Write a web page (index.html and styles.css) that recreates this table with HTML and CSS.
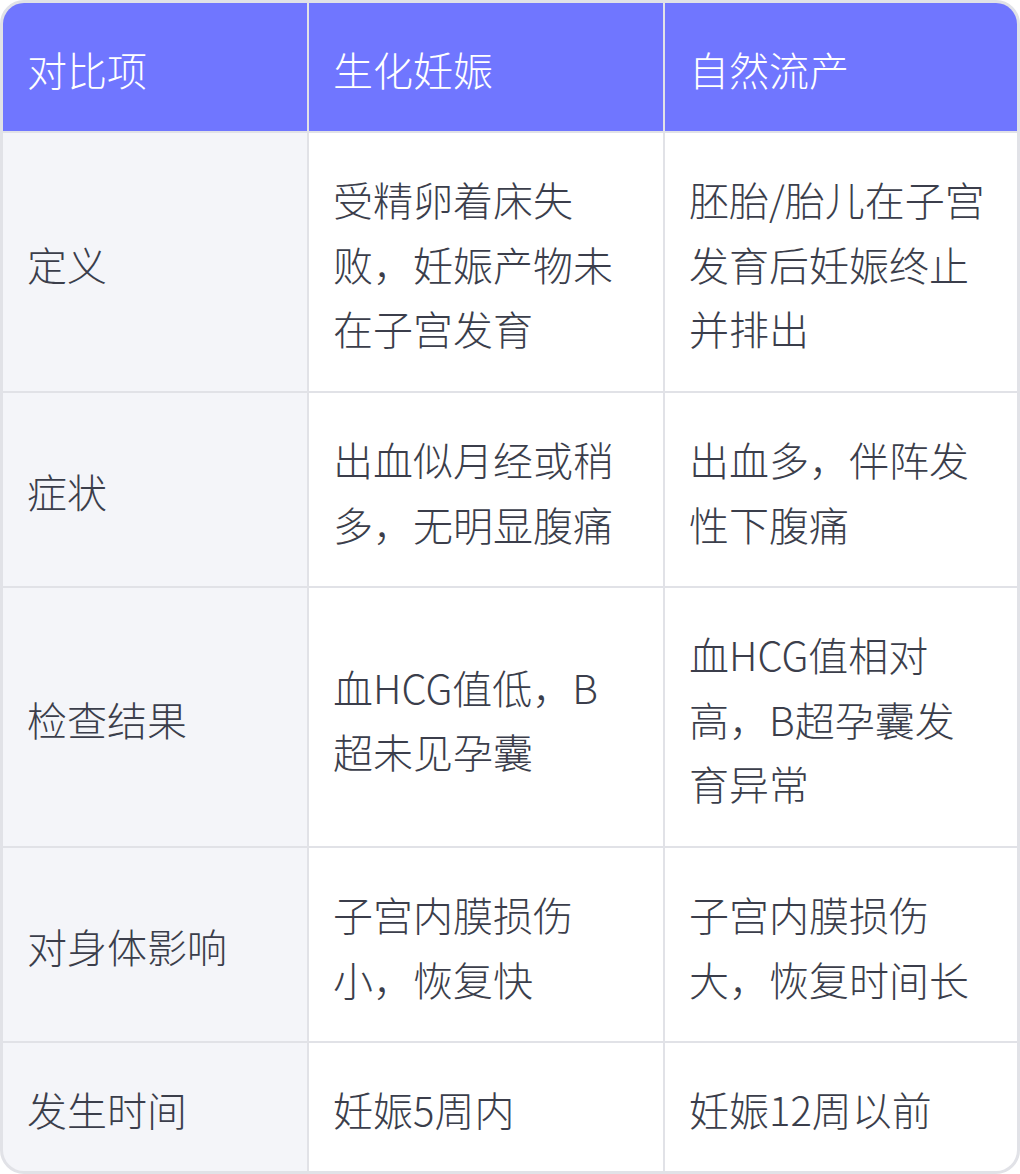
FILE: index.html
```html
<!DOCTYPE html>
<html lang="zh-CN">
<head>
<meta charset="utf-8">
<title>生化妊娠与自然流产对比</title>
<link rel="stylesheet" href="styles.css">
</head>
<body>
<div class="table">
  <div class="cell head">对比项</div>
  <div class="cell head">生化妊娠</div>
  <div class="cell head">自然流产</div>

  <div class="cell label">定义</div>
  <div class="cell">受精卵着床失败，妊娠产物未在子宫发育</div>
  <div class="cell">胚胎/胎儿在子宫发育后妊娠终止并排出</div>

  <div class="cell label">症状</div>
  <div class="cell">出血似月经或稍多，无明显腹痛</div>
  <div class="cell">出血多，伴阵发性下腹痛</div>

  <div class="cell label">检查结果</div>
  <div class="cell">血HCG值低，B超未见孕囊</div>
  <div class="cell">血HCG值相对高，B超孕囊发育异常</div>

  <div class="cell label">对身体影响</div>
  <div class="cell">子宫内膜损伤小，恢复快</div>
  <div class="cell">子宫内膜损伤大，恢复时间长</div>

  <div class="cell label">发生时间</div>
  <div class="cell">妊娠5周内</div>
  <div class="cell">妊娠12周以前</div>
</div>
</body>
</html>
```

FILE: styles.css
```css
html, body {
  margin: 0;
  padding: 0;
  background: #ffffff;
}

.table {
  width: 1020px;
  height: 1174px;
  box-sizing: border-box;
  display: grid;
  grid-template-columns: 304px 354px 352px;
  grid-template-rows: 128px 258px 193px 258px 193px 128px;
  gap: 2px;
  background: #e1e2e7;
  border: 3px solid #e1e2e7;
  border-radius: 24px;
  overflow: hidden;
  font-family: "Noto Sans CJK SC", "Noto Sans", sans-serif;
  font-weight: 300;
  font-size: 40px;
  line-height: 64.5px;
  color: #3b3e4b;
}

.cell {
  background: #ffffff;
  display: flex;
  align-items: center;
  padding: 4px 29px 0 24px;
  box-sizing: border-box;
}

.head {
  background: #7076ff;
  color: #ffffff;
}

.label {
  background: #f4f5f9;
  padding-left: 24px;
}
```
